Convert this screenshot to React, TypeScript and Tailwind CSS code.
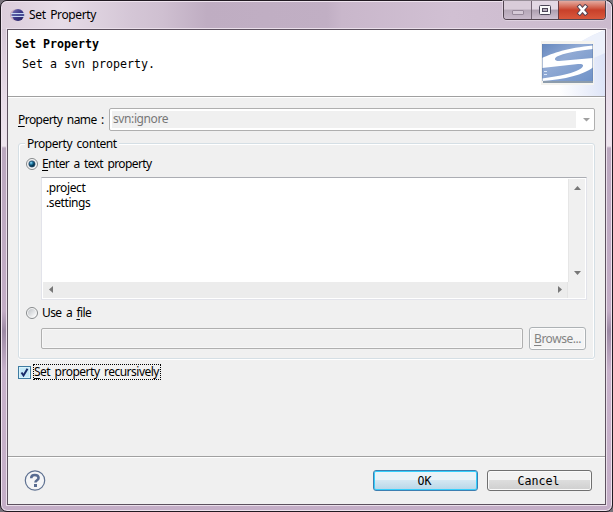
import React from "react";

const ui = "font-['Noto_Sans','Noto_Sans_CJK_KR',sans-serif] text-[12px] whitespace-pre [word-spacing:1.8px]";
const mono = "font-['DejaVu_Sans_Mono','Liberation_Mono',monospace] text-[11.63px] leading-[16px] whitespace-pre";

function U({ children }: { children: React.ReactNode }) {
  return <span className="underline underline-offset-2 decoration-1">{children}</span>;
}

function EclipseIcon() {
  return (
    <svg width="15" height="14" viewBox="0 0 15 14" className="ml-[8px]">
      <defs>
        <linearGradient id="ec" x1="0" x2="1" y1="0" y2="1">
          <stop offset="0" stopColor="#7d78b8" />
          <stop offset=".5" stopColor="#3b3786" />
          <stop offset="1" stopColor="#252060" />
        </linearGradient>
      </defs>
      <ellipse cx="6" cy="7" rx="6" ry="5.8" fill="#c4a9bd" />
      <circle cx="8" cy="7" r="6" fill="url(#ec)" />
      <path d="M1 5.5h13.4M1 8.5h13.4" stroke="#c7d7f2" strokeWidth="1" />
      <path d="M1.5 7h13" stroke="#5d68ad" strokeWidth="1" />
    </svg>
  );
}

function WindowButtons() {
  return (
    <div className="flex h-[19px] w-[103px] rounded-b-[4px] border border-t-0 border-[#51444f] overflow-hidden shadow-[0_0_0_1px_#e9deea99]">
      <div className="w-[28px] border-r border-[#736574] bg-linear-to-b from-[#d9ccd9] from-45% via-[#b6a8b8] via-50% to-[#c9bacb] flex justify-center">
        <div className="mt-[9px] w-3 h-[5px] rounded-[1px] border border-[#97899a] bg-[#d6cad7]" />
      </div>
      <div className="w-[27px] border-r border-[#6b3a40] bg-linear-to-b from-[#e3d8e4] from-45% via-[#ad9eaf] via-50% to-[#cfc1d1] flex justify-center">
        <svg width="12" height="11" viewBox="0 0 12 11" className="mt-[4px]">
          <rect x=".5" y=".5" width="11" height="9" rx="1" fill="#fafafa" stroke="#4b4657" />
          <rect x="3.5" y="3.5" width="5" height="3" fill="#b9adbc" stroke="#4b4657" />
        </svg>
      </div>
      <div className="flex-1 bg-linear-to-b from-[#e3aaa0] via-[#c8402a] via-50% to-[#d9583c] flex justify-center">
        <svg width="13" height="12" viewBox="0 0 13 12" className="mt-[3px]">
          <path d="M3.7 2.8 9.3 9.2M9.3 2.8 3.7 9.2" stroke="#574554" strokeWidth="4.4" strokeLinecap="square" />
          <path d="M3.7 2.8 9.3 9.2M9.3 2.8 3.7 9.2" stroke="#fff" strokeWidth="2.5" strokeLinecap="square" />
        </svg>
      </div>
    </div>
  );
}

function HeaderArt() {
  return (
    <svg width="100" height="66" viewBox="0 0 100 66">
      <defs>
        <linearGradient id="sky" x1="0" x2="1" y1=".6" y2="0.5">
          <stop offset=".3" stopColor="#fff" />
          <stop offset="1" stopColor="#dce3f7" />
        </linearGradient>
        <linearGradient id="blue" x1="0" x2="1" y1="0" y2="1">
          <stop offset="0" stopColor="#6688be" />
          <stop offset=".4" stopColor="#91aad4" />
          <stop offset="1" stopColor="#6f92c8" />
        </linearGradient>
      </defs>
      <path d="M100 0v66H30C40 36 67 12 100 0z" fill="url(#sky)" />
      <path d="M100 0v23L82 31 62 20Q78 9 100 0z" fill="#edf1fb" />
      <rect x="36" y="11" width="53" height="44" fill="#f4f3ef" />
      <rect x="38" y="15" width="50" height="38" fill="#8c9cac" />
      <rect x="37" y="14" width="51" height="37" fill="url(#blue)" />
      <path d="M37 28C48 23 62 18 88 15.5V19C72 20.5 58 23.5 52 26.5 49 28.5 49 31 54 31L88 28V37.5C79 44.5 60 49.5 37 51V48.5C55 46 70 43 76 38.5 80 35 78 33.5 73 34L37 38z" fill="#fff" />
      <path d="M39 41.5h3M39 44.5h3" stroke="#dbe7f7" />
      <path d="M37.5 14v37M87.5 14v37" stroke="#637fac" strokeOpacity=".5" />
    </svg>
  );
}

function Radio({ on = false }: { on?: boolean }) {
  return (
    <svg width="12" height="12" viewBox="0 0 12 12">
      <defs>
        <radialGradient id="dot" cx=".35" cy=".3">
          <stop offset="0" stopColor="#a7e2f7" />
          <stop offset=".45" stopColor="#2786b4" />
          <stop offset="1" stopColor="#073952" />
        </radialGradient>
        <linearGradient id="dish" x1="0" y1="0" x2="1" y2="1">
          <stop stopColor="#bfc3c7" />
          <stop offset="1" stopColor="#fff" />
        </linearGradient>
      </defs>
      <circle cx="6" cy="6" r="5.5" fill="#f8f8f8" stroke="#85898b" />
      <circle cx="6" cy="6" r="4" fill="url(#dish)" />
      {on && <circle cx="6" cy="6" r="3.1" fill="url(#dot)" stroke="#264b6b" strokeWidth=".7" />}
    </svg>
  );
}

function Tri({ d, c = "#777" }: { d: string; c?: string }) {
  return (
    <svg width="7" height="7" viewBox="0 0 7 7">
      <path d={d} fill={c} />
    </svg>
  );
}

function TextArea() {
  return (
    <div className="ml-[22px] mt-[5px] w-[546px] h-[123px] bg-white border border-[#e2e3ea] border-t-[#abadb3] p-px flex flex-col">
      <div className="flex h-[103px]">
        <div className={`${ui} flex-1 pl-[3px] pt-px leading-[15px] tracking-[-0.4px]`}>
          {".project\n.settings"}
        </div>
        <div className="w-[17px] bg-[#f0f0f0] border-l border-[#e6e6e6] flex flex-col justify-between items-center pt-[6px] pb-[6px]">
          <Tri d="M0 5h7L3.5 1z" />
          <Tri d="M0 2h7L3.5 6z" />
        </div>
      </div>
      <div className="flex h-[16px] bg-[#f0f0f0]">
        <div className="w-[525px] bg-[#ececec] border-r border-[#e4e4e4] flex justify-between items-center pl-[5px] pr-[4px] pb-[2px]">
          <Tri d="M5 0v7L1 3.5z" />
          <Tri d="M2 0v7L6 3.5z" />
        </div>
      </div>
    </div>
  );
}

function Group() {
  return (
    <fieldset className="relative ml-[10px] mt-[12px] w-[577px] h-[216px] rounded-[3px] border border-[#d5dfe5] shadow-[inset_1px_1px_0_#fff,inset_-1px_0_0_#fff,0_1px_0_#fff]">
      <div className="absolute left-[6px] -top-[8px] px-[2px] bg-[#f0f0f0]">
        <span className={`${ui} leading-[16px] block tracking-[-0.46px]`}>Property content</span>
      </div>
      <div className="flex items-center h-[16px] mt-[12px] pl-[7px] gap-[4px]">
        <Radio on />
        <span className={`${ui} leading-[16px] tracking-[-0.6px]`}><U>E</U>nter a text property</span>
      </div>
      <TextArea />
      <div className="flex items-center h-[16px] mt-[5px] pl-[7px] gap-[4px]">
        <Radio />
        <span className={`${ui} leading-[16px] tracking-[-0.58px]`}>Use a <U>f</U>ile</span>
      </div>
      <div className="flex items-center ml-[22px] mt-[6px] gap-[6px]">
        <div className="w-[482px] h-[21px] rounded-[2px] border border-[#afafaf] shadow-[inset_0_0_0_1px_#f7f7f7]" />
        <div className="w-[57px] h-[23px] rounded-[3px] border border-[#adb2b5] bg-[#f4f4f4] shadow-[inset_0_0_0_1px_#fcfcfc] flex items-center justify-center text-[#838383]">
          <span className={`${ui} leading-[16px] tracking-[-0.47px]`}><U>B</U>rowse...</span>
        </div>
      </div>
    </fieldset>
  );
}

export default function App() {
  return (
    <div className="w-[613px] h-[512px] bg-[#77717a] overflow-hidden">
      <div className="w-[613px] h-[512px] rounded-[7px] border border-[#211a22] shadow-[inset_0_0_0_1px_#eee3ee] bg-[linear-gradient(180deg,#d3c2d3_0,#d5c7d6_28px,#e8dce8_100px,#eee5ee_145px,#bba8bf_147px,#c3adc6_310px,#9c89a4_330px,#c8b2cb_370px,#c4aec7_100%)] flex flex-col">
        <div className="flex justify-between h-[28px] rounded-t-[6px] border-t border-[#eee3ee] mx-px bg-[linear-gradient(90deg,#dccddb_0,#e6dce7_60px,#d4c6d6_130px,#cfc0d1_160px,#bfadc2_205px,#c1afc4_325px,#c9b7cb_340px,#d1c0d3_450px,#cbbacd_100%)]">
          <div className="flex items-center h-[28px] -mt-px">
            <EclipseIcon />
            <span className={`${ui} leading-[16px] ml-[4px] tracking-[-0.36px]`}>Set Property</span>
          </div>
          <div className="-mt-px mr-[5px]">
            <WindowButtons />
          </div>
        </div>
        <div className="mx-[6px] w-[599px] h-[476px] border border-[#5d515f] bg-[#f0f0f0] shadow-[0_0_0_1px_#eadfea]">
          <div className="flex justify-between h-[67px] bg-white border-b border-[#a0a0a0]">
            <div className="pt-[6px]">
              <div className={`${mono} ml-[7px] font-bold`}>Set Property</div>
              <div className={`${mono} ml-[14px] mt-[4px]`}>Set a svn property.</div>
            </div>
            <HeaderArt />
          </div>
          <div className="border-t border-white pt-[10px] flex h-[34px] pl-[10px]">
            <span className={`${ui} leading-[16px] w-[91px] pt-[4px] tracking-[-0.55px]`}><U>P</U>roperty name :</span>
            <div className="w-[486px] h-[23px] rounded-[2px] border border-[#afafaf] bg-white flex p-[2px] justify-between">
              <div className="w-[464px] bg-[#f0f0f0] text-[#777]">
                <span className={`${ui} leading-[16px] ml-px block tracking-[-0.4px]`}>svn:ignore</span>
              </div>
              <div className="mr-[2px] pt-[5px]"><Tri d="M0 2h7L3.5 5.5z" c="#a0a0a0" /></div>
            </div>
          </div>
          <Group />
          <div className="flex items-center ml-[10px] mt-[5px] gap-[3px] h-[16px]">
            <svg width="13" height="13" viewBox="0 0 13 13">
              <rect x=".5" y=".5" width="12" height="12" fill="#d9f3fc" stroke="#3e7ca2" />
              <rect x="2" y="2" width="9" height="9" fill="#c3e8f7" />
              <path d="M3.5 6.5 5.5 9.5 9.5 2.8" fill="none" stroke="#182a69" strokeWidth="2" />
            </svg>
            <div className="-ml-px w-[128px] h-[16px] border border-dotted border-black flex items-center">
              <span className={`${ui} leading-[16px] tracking-[-0.5px]`}><U>S</U>et property recursively</span>
            </div>
          </div>
          <div className="mt-[76px] border-t border-[#a0a0a0]">
            <div className="border-t border-white flex pt-[12px] pl-[16px]">
              <svg width="22" height="22" viewBox="0 0 22 22">
                <circle cx="11" cy="10.5" r="9.7" fill="#f4f5f7" stroke="#5e7191" strokeWidth="1.2" />
                <path d="M7.2 8.2c0-2.4 1.6-3.2 3.6-3.2s3.8 1 3.8 3c0 2.2-3.2 2.4-3.2 4.6" fill="none" stroke="#576b91" strokeWidth="2.5" />
                <rect x="10" y="14" width="3" height="3" fill="#576b91" />
              </svg>
              <div className="flex ml-[327px] gap-[9px]">
                <div className="w-[105px] h-[21px] rounded-[3px] border border-[#3c7fb1] shadow-[inset_0_0_0_1px_#35cffc] bg-linear-to-b from-[#eaf3f8] from-45% via-[#d3e7f2] via-50% to-[#b6d6e8] flex items-center justify-center">
                  <span className={`${mono} -ml-[2px]`}>OK</span>
                </div>
                <div className="w-[105px] h-[21px] rounded-[3px] border border-[#707070] shadow-[inset_0_0_0_1px_#fafafa] bg-linear-to-b from-[#f2f2f2] from-45% via-[#dddddd] via-50% to-[#cfcfcf] flex items-center justify-center">
                  <span className={`${mono} -ml-[2px]`}>Cancel</span>
                </div>
              </div>
            </div>
          </div>
        </div>
      </div>
    </div>
  );
}
